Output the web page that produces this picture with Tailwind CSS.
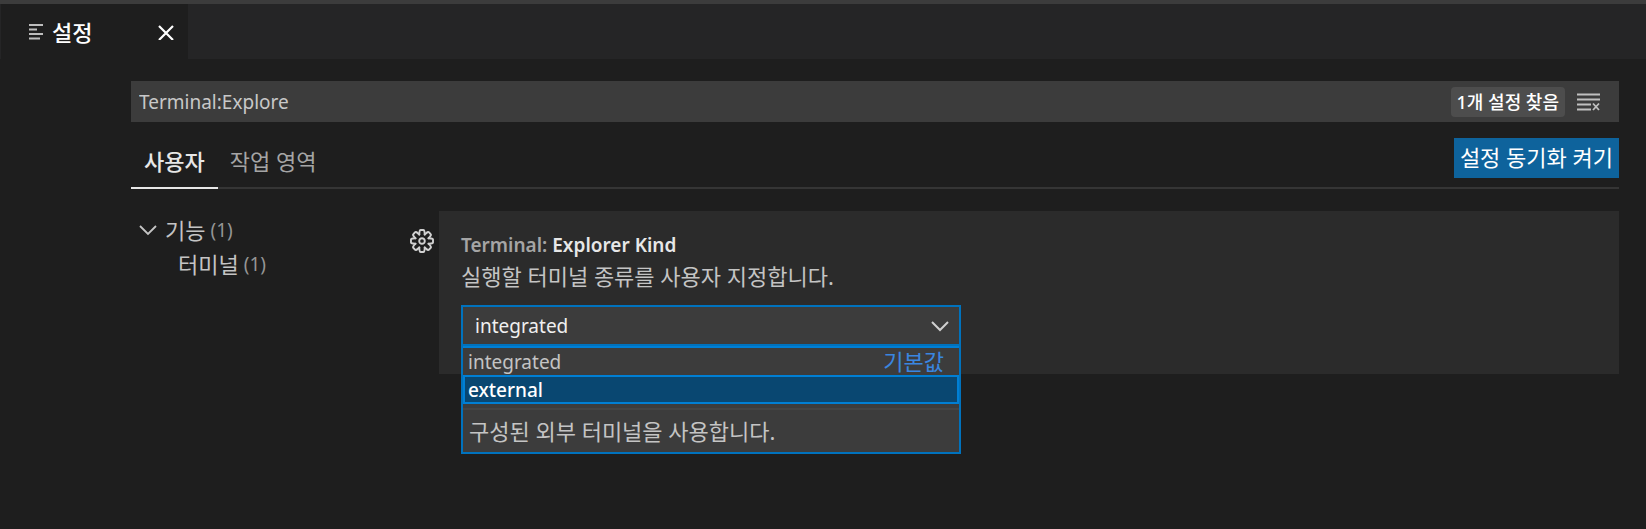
<!DOCTYPE html>
<html lang="ko">
<head>
<meta charset="utf-8">
<meta name="viewport" content="width=device-width, initial-scale=1">
<title>설정</title>
<script src="https://cdn.jsdelivr.net/npm/@tailwindcss/browser@4"></script>
</head>
<body class="min-h-screen bg-[#1e1e1e] font-['Noto_Sans','Noto_Sans_CJK_KR',sans-serif] text-[19px] leading-7 text-[#c4c4c4]">
<header class="border-t-4 border-[#3c3c3c] bg-[#252526] pl-px">
  <div class="flex h-[55px] w-[187px] items-center bg-[#1e1e1e] pr-3 pl-7 text-white">
    <svg class="h-4 w-[15px] shrink-0" viewBox="0 0 15 16" fill="none" stroke="#bdbdbd" stroke-width="2" aria-hidden="true"><path d="M0 1h14M0 5.500h8M0 10h14M0 14.500h11"/></svg>
    <span class="ml-2 text-[22px] font-medium">설정</span>
    <button type="button" aria-label="닫기" class="ml-auto flex size-5 items-center justify-center">
      <svg class="size-4" viewBox="0 0 16 16" fill="none" stroke="#fff" stroke-width="2.200" aria-hidden="true"><path d="M1 2l14 14M15 2L1 16"/></svg>
    </button>
  </div>
</header>
<main class="pt-[22px] pr-[27px] pl-[131px]">
  <div class="flex h-[41px] items-center bg-[#3c3c3c] pr-[18px] pl-2">
    <input type="text" aria-label="설정 검색" value="Terminal:Explore" class="h-full min-w-0 flex-1 bg-transparent text-[#c8c8c8] outline-none">
    <span class="rounded-sm bg-[#4d4d4d] px-[6px] text-[18px] leading-[30px] font-medium text-white">1개 설정 찾음</span>
    <button type="button" aria-label="검색 결과 지우기" class="ml-3 block">
      <svg class="h-[18px] w-6" viewBox="0 0 24 18" fill="none" stroke="#c0c0c0" stroke-width="1.8" aria-hidden="true"><path d="M0 1.500h23M0 6.500h23M0 11.500h14M0 16.500h14M16 10.500l6 6.500M22 10.500l-6 6.500"/></svg>
    </button>
  </div>
  <div class="mt-4 flex h-[51px] items-start justify-between border-b-2 border-[#353535]">
    <nav class="flex text-[22px]" aria-label="설정 범위">
      <a href="#user" class="block h-[51px] border-b-2 border-[#e7e7e7] px-[13px] pt-[9px] font-medium text-[#e7e7e7]">사용자</a>
      <a href="#workspace" class="block h-[51px] px-3 pt-[9px] text-[#a5a5a5]">작업 영역</a>
    </nav>
    <button type="button" class="h-10 bg-[#0e639c] px-1.5 pb-0.5 text-[22px] text-white">설정 동기화 켜기</button>
  </div>
  <div class="mt-[22px] flex items-start">
    <nav class="w-[279px] shrink-0 pl-2" aria-label="설정 목차">
      <a href="#features" class="flex h-[35px] items-center pt-[3px]">
        <svg class="mr-2 h-4 w-[18px]" viewBox="0 0 18 16" fill="none" stroke="#c5c5c5" stroke-width="1.8" aria-hidden="true"><path d="M1 4l8 8 8-8"/></svg>
        <span class="text-[22px]">기능</span><span class="ml-[5px] text-[#959595]">(1)</span>
      </a>
      <a href="#terminal" class="flex h-[35px] items-center pl-[39px]">
        <span class="text-[22px]">터미널</span><span class="ml-[5px] text-[#959595]">(1)</span>
      </a>
    </nav>
    <button type="button" aria-label="설정 작업 더 보기" class="mt-[18px] mr-[5px] block shrink-0">
      <svg class="size-6" viewBox="-12 -12 24 24" fill="none" stroke="#d0d0d0" stroke-width="1.900" stroke-linejoin="round" stroke-linecap="round" aria-hidden="true">
        <path id="tooth" d="M-2.700-6.500C-2.600-12-1.800-11-0-11S2.600-12 2.700-6.500"/>
        <use href="#tooth" transform="rotate(45)"/><use href="#tooth" transform="rotate(90)"/><use href="#tooth" transform="rotate(135)"/><use href="#tooth" transform="rotate(180)"/><use href="#tooth" transform="rotate(225)"/><use href="#tooth" transform="rotate(270)"/><use href="#tooth" transform="rotate(315)"/>
        <circle r="2.800"/>
      </svg>
    </button>
    <section class="h-[163px] min-w-0 flex-1 bg-[#2b2b2b] px-[22px] pt-5">
      <label for="kind" class="block font-semibold text-[#a5a5a5]">Terminal: <span class="text-[#e7e7e7]">Explorer Kind</span></label>
      <p class="mt-[3px] text-[22px]">실행할 터미널 종류를 사용자 지정합니다.</p>
      <div class="relative mt-[15px] w-[500px] max-w-full">
        <select id="kind" class="block h-[41px] w-full appearance-none border-2 border-[#0072bd] bg-[#3c3c3c] pl-3 text-[#f0f0f0] outline-none">
          <option selected>integrated</option>
          <option>external</option>
        </select>
        <svg class="pointer-events-none absolute top-3 right-3 h-4 w-[18px]" viewBox="0 0 18 16" fill="none" stroke="#d0d0d0" stroke-width="2" aria-hidden="true"><path d="M1 5l8 8 8-8"/></svg>
        <div class="absolute top-full left-0 w-full border-2 border-t-0 border-[#0072bd] bg-[#3c3c3c]">
          <ul role="listbox" aria-label="Explorer Kind">
            <li role="option" aria-selected="false" class="flex h-[29px] items-center justify-between border-t-2 border-[#007fd4] pr-[15px] pl-[5px]">integrated<span class="pb-0.5 text-[22px] text-[#3a86e0]">기본값</span></li>
            <li role="option" aria-selected="true" class="flex h-[29px] items-center border-2 border-[#007fd4] bg-[#094771] pl-[3px] font-medium text-white">external</li>
          </ul>
          <p class="mt-1 border-t-2 border-[#444444] px-[6px] pt-[7px] pb-[7px] text-[22px]">구성된 외부 터미널을 사용합니다.</p>
        </div>
      </div>
    </section>
  </div>
</main>
</body>
</html>
